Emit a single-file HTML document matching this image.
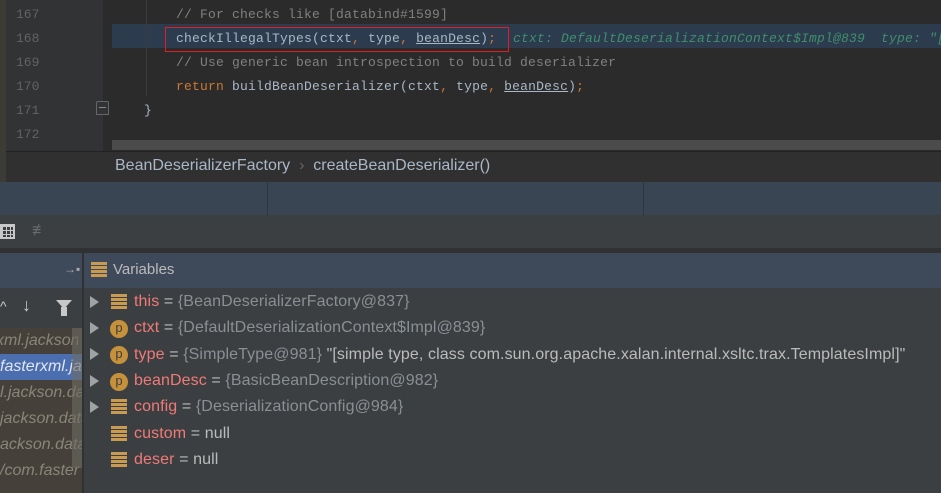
<!DOCTYPE html>
<html><head><meta charset="utf-8"><style>
*{margin:0;padding:0;box-sizing:border-box}
body{width:941px;height:493px;overflow:hidden;background:#3c3f41;position:relative;font-family:"Liberation Sans",sans-serif}
.a{position:absolute}
.code{font-family:"Liberation Mono",monospace;font-size:13px;letter-spacing:0.2px;color:#a9b7c6;white-space:pre;line-height:24px}
.ln{font-family:"Liberation Mono",monospace;font-size:13px;color:#606366;line-height:24px}
.v{font-size:16px;letter-spacing:0.1px;color:#8a8f94;white-space:pre;position:absolute;left:134px;line-height:20px}
.n{color:#f07a78}.w{color:#bbbbbb}
.tri{position:absolute;left:90px;width:0;height:0;border-left:9px solid #a0a3a6;border-top:6px solid transparent;border-bottom:6px solid transparent}
.st{position:absolute;left:111px;width:16px;height:16px;background:repeating-linear-gradient(#c99b52 0 3px,#3c3f41 3px 4px)}
.p{position:absolute;left:110px;width:18px;height:18px;border-radius:50%;background:#c6913b;color:#3c3f41;font-size:13px;text-align:center;line-height:16px}
.f{position:absolute;left:0;width:82px;font-size:16px;font-style:italic;color:#8a8578;white-space:pre;overflow:hidden;line-height:26px}
</style></head><body>
<div class="a" style="left:0;top:0;width:6px;height:182px;background:#3d3b36"></div>
<div class="a" style="left:6px;top:0;width:97px;height:152px;background:#313335"></div>
<div class="a" style="left:103px;top:0;width:838px;height:152px;background:#2b2b2b"></div>
<div class="a" style="left:112px;top:24px;width:829px;height:24px;background:#2d3b4f"></div>
<div class="a" style="left:146px;top:0;width:1px;height:96px;background:#3b3b3b"></div>
<div class="a ln" style="left:16px;top:3px">167<br>168<br>169<br>170<br>171<br>172</div>
<div class="a" style="left:96px;top:101px;width:13px;height:14px;border:1px solid #666;border-radius:2px 2px 0 0;background:#313335"></div>
<div class="a" style="left:99px;top:107px;width:7px;height:1px;background:#888"></div>
<div class="a code" style="left:176px;top:3px"><span style="color:#808080">// For checks like [databind#1599]</span>
checkIllegalTypes(ctxt<span style="color:#cc7832">,</span> type<span style="color:#cc7832">,</span> <u>beanDesc</u>)<span style="color:#cc7832">;</span>
<span style="color:#808080">// Use generic bean introspection to build deserializer</span>
<span style="color:#cc7832">return</span> buildBeanDeserializer(ctxt<span style="color:#cc7832">,</span> type<span style="color:#cc7832">,</span> <u>beanDesc</u>)<span style="color:#cc7832">;</span></div>
<div class="a code" style="left:144px;top:99px">}</div>
<div class="a code" style="left:513px;top:27px;color:#3f8f6a;font-style:italic">ctxt: DefaultDeserializationContext$Impl@839  type: "[</div>
<div class="a" style="left:165px;top:27px;width:344px;height:25px;border:1px solid #e02020"></div>
<div class="a" style="left:112px;top:140px;width:829px;height:10px;background:#4b4b4b"></div>
<div class="a" style="left:6px;top:151px;width:935px;height:1px;background:#222"></div>
<div class="a" style="left:6px;top:152px;width:935px;height:30px;background:#303030"></div>
<div class="a" style="left:115px;top:157px;font-size:16px;color:#a9b7c6;white-space:pre">BeanDeserializerFactory  <span style="color:#666">›</span>  createBeanDeserializer()</div>
<div class="a" style="left:0;top:182px;width:941px;height:33px;background:#3a4553"></div>
<div class="a" style="left:267px;top:182px;width:1px;height:33px;background:#2e3540"></div>
<div class="a" style="left:643px;top:182px;width:1px;height:33px;background:#2e3540"></div>
<div class="a" style="left:0;top:215px;width:941px;height:33px;background:#3c3f41"></div>
<div class="a" style="left:0;top:224px;width:15px;height:15px;border:2px solid #c8c8c8;background:repeating-linear-gradient(90deg,#c8c8c8 0 1px,transparent 1px 4px),repeating-linear-gradient(#c8c8c8 0 1px,transparent 1px 4px)"></div>
<div class="a" style="left:32px;top:222px;color:#6a6d70;font-size:16px">≢</div>
<div class="a" style="left:0;top:248px;width:941px;height:5px;background:#2f3133"></div>
<div class="a" style="left:0;top:253px;width:941px;height:35px;background:#3e4959"></div>
<div class="a" style="left:82px;top:253px;width:2px;height:240px;background:#2f3133"></div>
<div class="a" style="left:64px;top:262px;color:#aaa;font-size:12px">→▪</div>
<div class="st" style="left:91px;top:262px;background:repeating-linear-gradient(#c99b52 0 3px,#3e4959 3px 4px)"></div>
<div class="a" style="left:113px;top:261px;font-size:15px;color:#bbbbbb">Variables</div>
<div class="a" style="left:0;top:288px;width:82px;height:40px;background:#3c3f41"></div>
<div class="a" style="left:22px;top:295px;color:#c8c8c8;font-size:18px">↓</div>
<div class="a" style="left:56px;top:300px;width:0;height:0;border-left:8px solid transparent;border-right:8px solid transparent;border-top:9px solid #c8c8c8"></div>
<div class="a" style="left:61px;top:307px;width:6px;height:9px;background:#c8c8c8"></div>
<div class="a" style="left:0;top:298px;color:#c8c8c8;font-size:14px">^</div>
<div class="a" style="left:0;top:328px;width:82px;height:165px;background:#45413a"></div>
<div class="a" style="left:0;top:354px;width:82px;height:26px;background:#4b6eaf"></div>
<div class="f" style="top:328px;left:-4px">xml.jackson</div>
<div class="f" style="top:354px;color:#e0e6f0">fasterxml.jac</div>
<div class="f" style="top:380px">l.jackson.dat</div>
<div class="f" style="top:406px">jackson.data</div>
<div class="f" style="top:432px">ackson.data</div>
<div class="f" style="top:458px">/com.faster</div>
<div class="a" style="left:72px;top:328px;width:10px;height:140px;background:rgba(110,106,96,0.6)"></div>
<div class="tri" style="top:296px"></div><div class="st" style="top:294px"></div>
<div class="v" style="top:292px"><span class="n">this</span> <span class="w">=</span> {BeanDeserializerFactory@837}</div>
<div class="tri" style="top:322px"></div><div class="p" style="top:320px">p</div>
<div class="v" style="top:318px"><span class="n">ctxt</span> <span class="w">=</span> {DefaultDeserializationContext$Impl@839}</div>
<div class="tri" style="top:348px"></div><div class="p" style="top:346px">p</div>
<div class="v" style="top:345px"><span class="n">type</span> <span class="w">=</span> {SimpleType@981} <span class="w">"[simple type, class com.sun.org.apache.xalan.internal.xsltc.trax.TemplatesImpl]"</span></div>
<div class="tri" style="top:375px"></div><div class="p" style="top:373px">p</div>
<div class="v" style="top:371px"><span class="n">beanDesc</span> <span class="w">=</span> {BasicBeanDescription@982}</div>
<div class="tri" style="top:401px"></div><div class="st" style="top:399px"></div>
<div class="v" style="top:397px"><span class="n">config</span> <span class="w">=</span> {DeserializationConfig@984}</div>
<div class="st" style="top:426px"></div>
<div class="v" style="top:424px"><span class="n">custom</span> <span class="w">= null</span></div>
<div class="st" style="top:452px"></div>
<div class="v" style="top:450px"><span class="n">deser</span> <span class="w">= null</span></div>
</body></html>
